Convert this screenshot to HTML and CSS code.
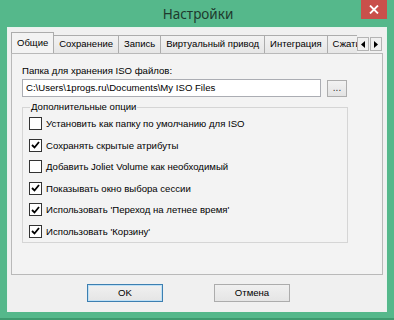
FILE: index.html
```html
<!DOCTYPE html>
<html lang="ru">
<head>
<meta charset="utf-8">
<link rel="stylesheet" href="styles.css">
</head>
<body>
<div class="window">
  <div class="titlebar">
    <span></span>
    <span class="title">Настройки</span>
    <span class="close"><svg width="10" height="9" viewBox="0 0 10 9"><path d="M1 0.5 L9 8.5 M9 0.5 L1 8.5" stroke="#fff" stroke-width="1.8" fill="none"/></svg></span>
  </div>
  <div class="client">
    <div class="tabstrip">
      <div class="tabs">
        <div class="tab active">Общие</div>
        <div class="tab">Сохранение</div>
        <div class="tab">Запись</div>
        <div class="tab">Виртуальный привод</div>
        <div class="tab">Интеграция</div>
        <div class="tab">Сжатие</div>
      </div>
      <div class="arrows">
        <span class="arrow"><svg width="4" height="7" viewBox="0 0 4 7"><path d="M4 0 L0 3.5 L4 7 Z" fill="#000"/></svg></span>
        <span class="arrow"><svg width="4" height="7" viewBox="0 0 4 7"><path d="M0 0 L4 3.5 L0 7 Z" fill="#000"/></svg></span>
      </div>
    </div>
    <div class="panel">
      <div class="label">Папка для хранения ISO файлов:</div>
      <div class="pathrow">
        <div class="input">C:\Users\1progs.ru\Documents\My ISO Files</div>
        <div class="browse">...</div>
      </div>
      <fieldset class="group">
        <legend>Дополнительные опции</legend>
        <div class="opt"><span class="cb"></span>Установить как папку по умолчанию для ISO</div>
        <div class="opt"><span class="cb"><svg width="9" height="8" viewBox="0 0 9 8"><path d="M1 4 L3.5 6.5 L8 1" stroke="#000" stroke-width="1.8" fill="none"/></svg></span>Сохранять скрытые атрибуты</div>
        <div class="opt"><span class="cb"></span>Добавить Joliet Volume как необходимый</div>
        <div class="opt"><span class="cb"><svg width="9" height="8" viewBox="0 0 9 8"><path d="M1 4 L3.5 6.5 L8 1" stroke="#000" stroke-width="1.8" fill="none"/></svg></span>Показывать окно выбора сессии</div>
        <div class="opt"><span class="cb"><svg width="9" height="8" viewBox="0 0 9 8"><path d="M1 4 L3.5 6.5 L8 1" stroke="#000" stroke-width="1.8" fill="none"/></svg></span>Использовать 'Переход на летнее время'</div>
        <div class="opt"><span class="cb"><svg width="9" height="8" viewBox="0 0 9 8"><path d="M1 4 L3.5 6.5 L8 1" stroke="#000" stroke-width="1.8" fill="none"/></svg></span>Использовать 'Корзину'</div>
      </fieldset>
    </div>
    <div class="buttons">
      <div class="btn default">OK</div>
      <div class="btn">Отмена</div>
    </div>
  </div>
</div>
</body>
</html>
```
FILE: styles.css
```css
html, body {
  margin: 0;
  padding: 0;
}
body {
  width: 394px;
  height: 320px;
  overflow: hidden;
  font-family: "Liberation Sans", Arial, sans-serif;
  font-size: 9.6px;
  color: #000;
}
.window {
  box-sizing: border-box;
  width: 394px;
  height: 320px;
  background: #55b88b;
  border-bottom: 2px solid #3f9a6f;
  padding: 0 7px 6px 7px;
  display: flex;
  flex-direction: column;
}
.titlebar {
  height: 27px;
  display: grid;
  grid-template-columns: 1fr auto 1fr;
  align-items: start;
}
.title {
  font-family: "Noto Sans", sans-serif;
  font-size: 13.5px;
  color: #1e3a2e;
  line-height: 28px;
  padding-left: 2px;
}
.close {
  justify-self: end;
  width: 26px;
  height: 19px;
  background: #c9504b;
  display: flex;
  align-items: center;
  justify-content: center;
}
.client {
  flex: 1;
  background: #f0f0f0;
  border: 1px solid #e8f3ee;
  border-bottom: none;
  padding: 5px 3px 10px 3px;
  display: flex;
  flex-direction: column;
}
.tabstrip {
  height: 20px;
  display: flex;
  align-items: flex-end;
  position: relative;
  z-index: 1;
}
.tabs {
  width: 346px;
  overflow: hidden;
  display: flex;
  align-items: flex-end;
  height: 21px;
  padding-left: 1px;
  box-sizing: border-box;
}
.tab {
  flex: none;
  box-sizing: border-box;
  height: 18px;
  line-height: 16px;
  font-size: 9.5px;
  padding: 0 5px;
  border: 1px solid #acacac;
  border-bottom: none;
  margin-right: -1px;
  background: linear-gradient(#f2f2f2, #e6e6e6);
  color: #000;
}
.tab.active {
  height: 22px;
  margin-bottom: -1px;
  background: #f3f3f3;
  padding: 0 5px;
  line-height: 20px;
  margin-left: -1px;
  margin-right: -1px;
  position: relative;
  z-index: 2;
}
.arrows {
  display: flex;
  gap: 1px;
  margin-bottom: 2px;
}
.arrow {
  width: 12px;
  height: 14px;
  box-sizing: border-box;
  border: 1px solid #b4b4b4;
  background: #f0f0f0;
  display: flex;
  align-items: center;
  justify-content: center;
}
.panel {
  height: 222px;
  box-sizing: border-box;
  border: 1px solid #b9b9b9;
  background: #f3f3f3;
  padding: 10px 0 0 10px;
  display: flex;
  flex-direction: column;
}
.label {
  height: 14px;
  line-height: 14px;
}
.pathrow {
  display: flex;
  align-items: center;
  margin-top: 1px;
  gap: 6px;
}
.input {
  width: 299px;
  height: 18px;
  box-sizing: border-box;
  border: 1px solid #abadb3;
  background: #fff;
  line-height: 16px;
  padding-left: 3px;
  white-space: nowrap;
  overflow: hidden;
}
.browse {
  width: 20px;
  height: 17px;
  box-sizing: border-box;
  border: 1px solid #adadad;
  background: linear-gradient(#f2f2f2, #e3e3e3);
  text-align: center;
  line-height: 13px;
  font-size: 10px;
  color: #333;
}
.group {
  margin: 4px 0 0 0;
  width: 326px;
  box-sizing: border-box;
  border: 1px solid #d5d5d5;
  padding: 0 0 0 6px;
  display: flex;
  flex-direction: column;
}
.group legend {
  padding: 0 1px;
  margin-left: 1px;
  line-height: 12px;
}
.opt {
  height: 21.5px;
  display: flex;
  align-items: center;
  gap: 4px;
  white-space: nowrap;
}
.cb {
  width: 13px;
  height: 13px;
  box-sizing: border-box;
  border: 1px solid #333;
  background: #fff;
  display: flex;
  align-items: center;
  justify-content: center;
}
.buttons {
  display: flex;
  margin-top: 9px;
  padding-left: 76px;
  gap: 51px;
}
.btn {
  width: 76px;
  height: 18px;
  box-sizing: border-box;
  border: 1px solid #acacac;
  background: linear-gradient(#f0f0f0, #e5e5e5);
  text-align: center;
  line-height: 16px;
}
.btn.default {
  border-color: #3c7fb1;
  box-shadow: inset 0 0 0 1px #bfe0f5;
}
```
